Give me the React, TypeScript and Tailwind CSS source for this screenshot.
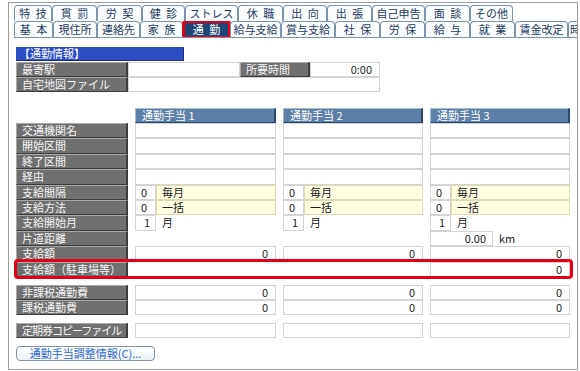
import React from 'react';

type TabDef = { label: string; w: string; sel?: boolean; left?: boolean };

const row1: TabDef[] = [
  { label: '特\u2002技', w: 'w-[38px]' },
  { label: '貫\u2002罰', w: 'w-[45px]' },
  { label: '労\u2002契', w: 'w-[45px]' },
  { label: '健\u2002診', w: 'w-[43px]' },
  { label: 'ストレス', w: 'w-[53px]' },
  { label: '休\u2002職', w: 'w-[45px]' },
  { label: '出\u2002向', w: 'w-[44px]' },
  { label: '出\u2002張', w: 'w-[45px]' },
  { label: '自己申告', w: 'w-[53px]' },
  { label: '面\u2002談', w: 'w-[45px]' },
  { label: 'その他', w: 'w-[43px]' },
];

const row2: TabDef[] = [
  { label: '基\u2002本', w: 'w-[39px]' },
  { label: '現住所', w: 'w-[44px]' },
  { label: '連絡先', w: 'w-[43px]' },
  { label: '家\u2002族', w: 'w-[43px]' },
  { label: '通\u2002勤', w: 'w-[47px]', sel: true },
  { label: '給与支給', w: 'w-[51px]' },
  { label: '賞与支給', w: 'w-[54px]' },
  { label: '社\u2002保', w: 'w-[45px]' },
  { label: '労\u2002保', w: 'w-[45px]' },
  { label: '給\u2002与', w: 'w-[45px]' },
  { label: '就\u2002業', w: 'w-[45px]' },
  { label: '賃金改定', w: 'w-[53px]' },
  { label: '時間外', w: 'w-[40px]', left: true },
];

const Tab = ({ t }: { t: TabDef }) => (
  <div
    className={`relative h-[16px] shrink-0 ${t.w} rounded-t-[4px] border border-b-0 border-[#7d92ab] text-[11px] leading-[14px] whitespace-nowrap ${
      t.left ? 'pl-[1px] text-left' : 'text-center'
    } ${t.sel ? 'bg-[#1f4775] text-white' : 'bg-[#fbfcfe] text-[#1d3a63]'}`}
  >
    {t.label}
    {t.sel && (
      <div className="absolute -left-[2px] -right-[2px] -top-[2px] -bottom-[2px] rounded-[4px] border-[3px] border-[#e4001b]" />
    )}
  </div>
);

const Label = ({ children, w = '', tight }: { children?: React.ReactNode; w?: string; tight?: boolean }) => (
  <div
    className={`${w} h-full shrink-0 overflow-hidden whitespace-nowrap border-t border-l border-t-[#a8a8a8] border-l-[#a8a8a8] border-r-2 border-b border-r-[#3d3d3d] border-b-[#3d3d3d] bg-[#707070] pl-[5px] text-[11px] leading-[12px] text-[#f6f6f6] ${
      tight ? 'tracking-[-1px]' : ''
    }`}
  >
    {children}
  </div>
);

const Box = ({ children, w = '', right }: { children?: React.ReactNode; w?: string; right?: boolean }) => (
  <div
    className={`${w} h-full shrink-0 border border-[#d3d3d3] bg-white text-[11px] leading-[13px] ${
      right ? 'pr-[7px] text-right' : 'pl-[5px]'
    }`}
  >
    {children}
  </div>
);

const Code = ({ code, text }: { code: string; text: string }) => (
  <div className="flex h-full">
    <div className="h-full w-[21px] shrink-0 border border-[#d3d3d3] bg-white pl-[5px] leading-[13px]">{code}</div>
    <div className="h-full flex-1 border border-[#dedbb0] bg-[#ffffe1] pl-[5px] leading-[13px]">{text}</div>
  </div>
);

const Month = () => (
  <div className="flex h-full">
    <div className="h-full w-[21px] shrink-0 border border-[#d3d3d3] bg-white pr-[5px] text-right leading-[13px]">1</div>
    <div className="pl-[6px] leading-[15px]">月</div>
  </div>
);

const Distance = () => (
  <div className="flex h-full">
    <div className="h-full w-[63px] shrink-0 border border-[#d3d3d3] bg-white pr-[6px] text-right leading-[13px]">0.00</div>
    <div className="pl-[6px] leading-[15px]">km</div>
  </div>
);

const grid = 'grid w-[554px] grid-cols-[112px_141px_140px_140px] gap-x-[7px]';

const Row = ({ label, cells, tight }: { label: string; cells: React.ReactNode[]; tight?: boolean }) => (
  <div className={`${grid} h-[15.4px]`}>
    <Label tight={tight}>{label}</Label>
    {cells.map((c, i) => (
      <div key={i} className="h-full">
        {c}
      </div>
    ))}
  </div>
);

const plain = () => [<Box />, <Box />, <Box />];
const zeros = () => [<Box right>0</Box>, <Box right>0</Box>, <Box right>0</Box>];

export default function App() {
  return (
    <div className="h-[371px] w-[580px] overflow-hidden bg-white pl-[8px] pt-[2px] font-['Noto_Sans_CJK_JP',sans-serif] text-[11px] text-[#222]">
      <div className="h-[368px] w-[570px] overflow-hidden border border-[#9c9c9c]">
        {/* tab strip */}
        <div className="pl-[5px] pt-[2px]">
          <div className="flex">
            {row1.map((t) => (
              <Tab key={t.label} t={t} />
            ))}
          </div>
          <div className="flex overflow-hidden border-b border-[#7d92ab]">
            {row2.map((t) => (
              <Tab key={t.label} t={t} />
            ))}
          </div>
        </div>

        <div className="pl-[7px] pt-[9px]">
          <div className="h-[14px] w-[168px] border-r border-b border-[#1b2f86] bg-[#2b4ec4] pl-[3px] text-[11px] leading-[13px] text-white">
            【通勤情報】
          </div>

          <div className="mt-[1px] flex h-[15px]">
            <Label w="w-[112px]">最寄駅</Label>
            <Box w="w-[112px]" />
            <Label w="w-[70px]">所要時間</Label>
            <Box w="w-[70px]" right>
              0:00
            </Box>
          </div>
          <div className="flex h-[15px]">
            <Label w="w-[112px]">自宅地図ファイル</Label>
            <Box w="w-[252px]" />
          </div>

          <div className={`${grid} mt-[16px] h-[15px]`}>
            <div />
            {['通勤手当 1', '通勤手当 2', '通勤手当 3'].map((h) => (
              <div
                key={h}
                className="h-full border-t border-l border-t-[#a9bbd0] border-l-[#a9bbd0] border-r-2 border-b border-r-[#2b4769] border-b-[#2b4769] bg-[#5d80a9] pl-[6px] text-[11px] leading-[12px] text-white"
              >
                {h}
              </div>
            ))}
          </div>

          <Row label="交通機関名" cells={plain()} />
          <Row label="開始区間" cells={plain()} />
          <Row label="終了区間" cells={plain()} />
          <Row label="経由" cells={plain()} />
          <Row label="支給間隔" cells={[<Code code="0" text="毎月" />, <Code code="0" text="毎月" />, <Code code="0" text="毎月" />]} />
          <Row label="支給方法" cells={[<Code code="0" text="一括" />, <Code code="0" text="一括" />, <Code code="0" text="一括" />]} />
          <Row label="支給開始月" cells={[<Month />, <Month />, <Month />]} />
          <Row label="片道距離" cells={[null, null, <Distance />]} />
          <Row label="支給額" cells={zeros()} />
          <div className="relative w-[554px]">
            <Row label="支給額（駐車場等）" cells={[null, null, <Box right>0</Box>]} />
            <div className="absolute -left-[2px] -right-[3px] -top-[3px] -bottom-[2px] rounded-[4px] border-[3px] border-[#e4001b]" />
          </div>

          <div className="mt-[8px]">
            <div className={`${grid} h-[15px]`}>
              <Label>非課税通勤費</Label>
              <Box right>0</Box>
              <Box right>0</Box>
              <Box right>0</Box>
            </div>
            <div className={`${grid} h-[15px]`}>
              <Label>課税通勤費</Label>
              <Box right>0</Box>
              <Box right>0</Box>
              <Box right>0</Box>
            </div>
          </div>

          <div className={`${grid} mt-[8px] h-[15px]`}>
            <Label tight>定期券コピーファイル</Label>
            <Box />
            <Box />
            <Box />
          </div>

          <button className="mt-[8px] block h-[15px] w-[139px] rounded-[4px] border border-[#8393aa] bg-gradient-to-b from-white to-[#eef2f7] text-center text-[11px] leading-[12px] text-[#2f6bd0]">
            通勤手当調整情報(C)...
          </button>
        </div>
      </div>
    </div>
  );
}
